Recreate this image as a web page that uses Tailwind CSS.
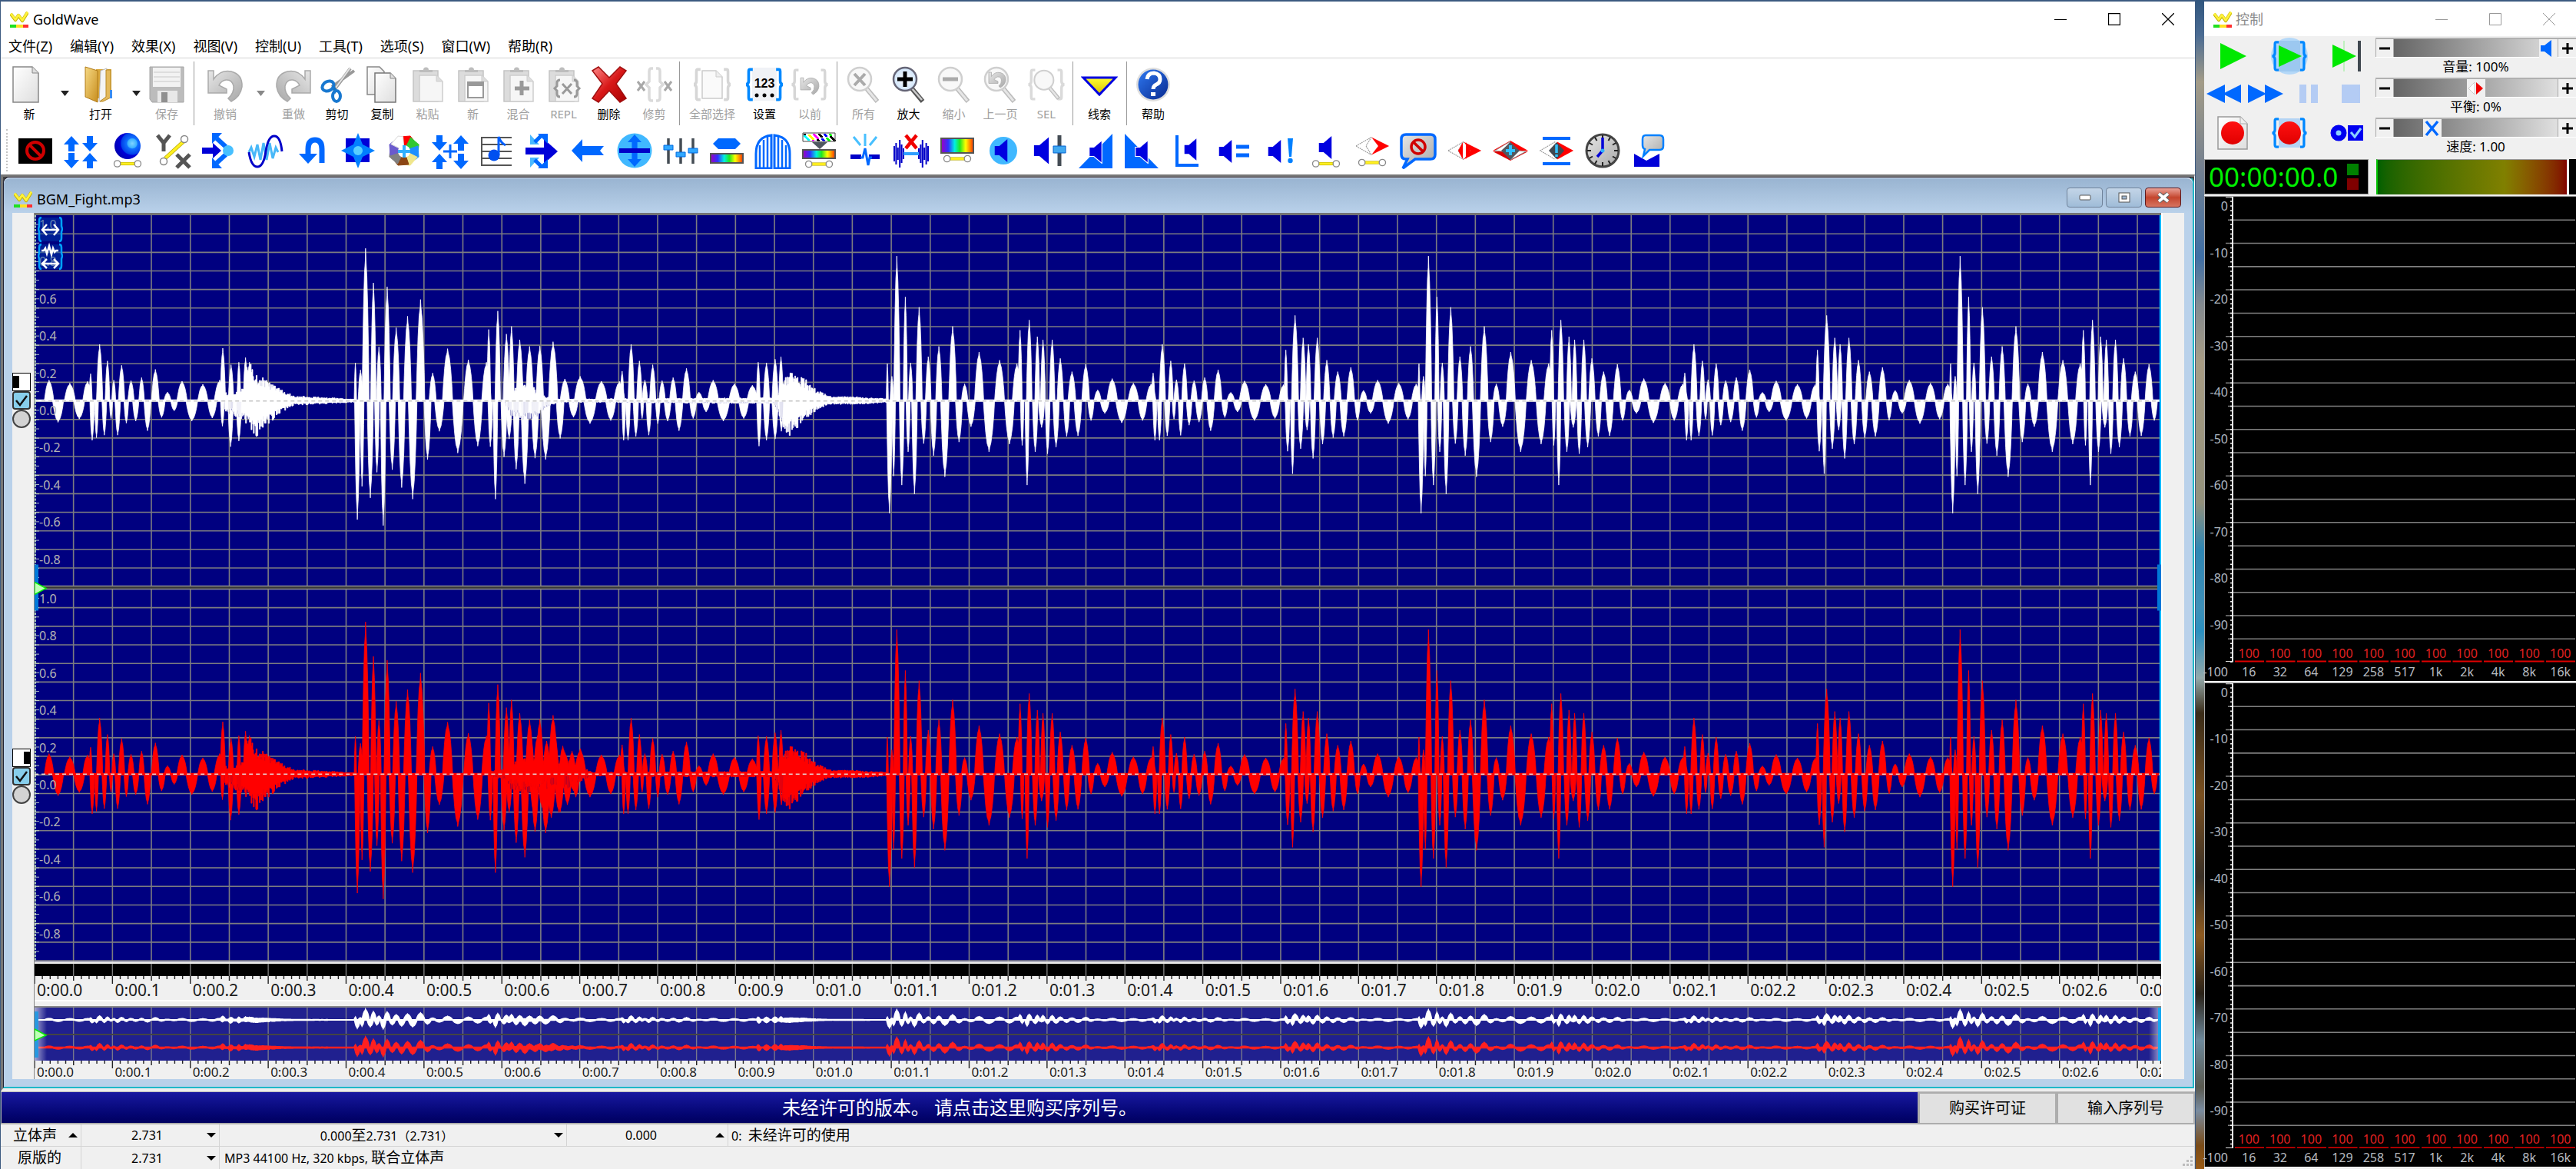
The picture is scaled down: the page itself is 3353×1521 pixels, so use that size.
<!DOCTYPE html>
<html lang="zh-CN">
<head>
<meta charset="utf-8">
<title>GoldWave</title>
<script src="https://cdn.jsdelivr.net/npm/@tailwindcss/browser@4"></script>
</head>
<body class="h-screen overflow-hidden flex bg-[#2f4a68] font-['Noto_Sans','Noto_Sans_CJK_SC',sans-serif] text-black">

<svg class="absolute w-0 h-0" aria-hidden="true">
  <defs>
    <linearGradient id="paper" x1="0" y1="0" x2="1" y2="1"><stop offset="0" stop-color="#fff"/><stop offset="1" stop-color="#dedede"/></linearGradient>
    <linearGradient id="silver" x1="0" y1="0" x2="1" y2="1"><stop offset="0" stop-color="#e6e6e6"/><stop offset="1" stop-color="#a8a8a8"/></linearGradient>
    <linearGradient id="folder" x1="0" y1="0" x2="1" y2="1"><stop offset="0" stop-color="#f6d984"/><stop offset="1" stop-color="#c98f1f"/></linearGradient>
    <linearGradient id="redx" x1="0" y1="0" x2="1" y2="1"><stop offset="0" stop-color="#ff8a8a"/><stop offset=".5" stop-color="#d81818"/><stop offset="1" stop-color="#a80000"/></linearGradient>
    <linearGradient id="redball" x1="0" y1="0" x2="0" y2="1"><stop offset="0" stop-color="#ff1010"/><stop offset="1" stop-color="#e00000"/></linearGradient>
    <linearGradient id="helpg" x1="0" y1="0" x2="1" y2="1"><stop offset="0" stop-color="#2f78f0"/><stop offset="1" stop-color="#082a90"/></linearGradient>
    <radialGradient id="ball" cx=".68" cy=".4" r=".7"><stop offset="0" stop-color="#7fd4ff"/><stop offset=".25" stop-color="#3ab0ff"/><stop offset=".3" stop-color="#1070ff"/><stop offset=".6" stop-color="#0040e8"/><stop offset=".65" stop-color="#0000d8"/><stop offset="1" stop-color="#0000b0"/></radialGradient>
    <radialGradient id="lens"><stop offset="0" stop-color="#fff"/><stop offset="1" stop-color="#cfe4fa"/></radialGradient>
    <linearGradient id="rainbow"><stop offset="0" stop-color="#a000c0"/><stop offset=".22" stop-color="#3030ff"/><stop offset=".42" stop-color="#00f0e0"/><stop offset=".58" stop-color="#20e820"/><stop offset=".76" stop-color="#ffff00"/><stop offset="1" stop-color="#ff3000"/></linearGradient>
    <linearGradient id="yel" x1="0" y1="0" x2="0" y2="1"><stop offset="0" stop-color="#ffff30"/><stop offset="1" stop-color="#d8c000"/></linearGradient>
    <linearGradient id="edgeL"><stop offset="0" stop-color="#fff" stop-opacity=".6"/><stop offset="1" stop-color="#fff" stop-opacity="0"/></linearGradient>
    <linearGradient id="edgeR"><stop offset="0" stop-color="#fff" stop-opacity="0"/><stop offset="1" stop-color="#fff" stop-opacity=".6"/></linearGradient>

    <symbol id="logo" viewBox="0 0 24 24"><path d="M1 5l6 8 4-6 5 7 7-11" fill="none" stroke="#c4b400" stroke-width="4.200" stroke-linejoin="round"/><path d="M1 4.500l6 8 4-6 5 7 7-11" fill="none" stroke="#fff23c" stroke-width="2.800" stroke-linejoin="round"/><path d="M0 19h8v4H0z" fill="#20e020"/><path d="M8 19h9v4H8z" fill="#ffe020"/><path d="M17 19h7v4h-7z" fill="#ff3030"/></symbol>
    <symbol id="clip" viewBox="0 0 48 48"><path d="M5 6h32v40H5z" fill="#dcdcdc" stroke="#c4c4c4" stroke-width="1.5"/><path d="M13 8V5h5a3.5 3.5 0 0 1 7 0h5v3z" fill="#bdbdbd"/><path d="M13 12h22l8 8v26H13z" fill="#f6f6f6" stroke="#cdcdcd" stroke-width="1.5"/><path d="M35 12v8h8" fill="#ddd" stroke="#cdcdcd"/></symbol>
    <symbol id="sl" viewBox="0 0 48 14"><path d="M12 7h24" stroke="#c0b000" stroke-width="5"/><path d="M12 7h24" stroke="#fff020" stroke-width="3.4"/><circle cx="8" cy="7" r="5" fill="#fff" stroke="#888" stroke-width="1.6"/><circle cx="40" cy="7" r="5" fill="#fff" stroke="#888" stroke-width="1.6"/></symbol>
    <symbol id="spk" viewBox="0 0 24 40"><path d="M1 12h8L23 0v40L9 28H1z" fill="#0000e0"/></symbol>
    <symbol id="au" viewBox="0 0 20 20"><path d="M0 11L10 0l10 11h-6v9H6v-9z" fill="#0068ff"/></symbol>
    <symbol id="ad" viewBox="0 0 20 20"><path d="M0 9l10 11L20 9h-6V0H6v9z" fill="#0068ff"/></symbol>
    <symbol id="br" viewBox="0 0 56 48"><path d="M11 2H7Q5 2 5 5v14q0 4-4 5q4 1 4 5v14q0 3 2 3h4M45 2h4q2 0 2 3v14q0 4 4 5q-4 1-4 5v14q0 3-2 3h-4" fill="none" stroke="currentColor" stroke-width="4"/></symbol>
    <symbol id="mag" viewBox="0 0 48 48"><path d="M27 28l15 18" stroke="#bbb" stroke-width="6"/><path d="M27 28l14 17" stroke="#e6e6e6" stroke-width="3"/><circle cx="19" cy="17" r="15" fill="#f8f8f8" stroke="#cfcfcf" stroke-width="2.5"/></symbol>
    <symbol id="undo" viewBox="0 0 48 48"><path d="M2 6h7v11Q18 4 32 7q15 4 14 20-2 13-14 19l-4-4q8-7 7-16-2-9-10-8-6 1-9 7l10 5v5H2z" fill="url(#silver)" stroke="#aaa" stroke-width="1.5"/></symbol>
    <symbol id="diam" viewBox="0 0 52 28"><path d="M24 1L2 14l22 13" fill="#fff" stroke="#999" stroke-width="1.3" stroke-dasharray="2 1"/><path d="M27 1l24 13-24 13z" fill="#f00"/></symbol>
    <symbol id="diamo" viewBox="0 0 52 28"><path d="M25 1L2 14l23 13-8-13z" fill="#fff" stroke="#999" stroke-width="1.3" stroke-dasharray="2 1"/><path d="M25 1l26 13-26 13 10-13z" fill="#f00"/></symbol>
  </defs>
</svg>

<!-- Editor window -->
<main class="flex-1 min-w-0 flex flex-col bg-white border-t-2 border-x border-[#3c5a80] border-b-0">
  <header class="h-[45px] flex items-center shrink-0">
    <svg class="w-6 h-6 ml-3 mr-[6px]"><use href="#logo"/></svg>
    <h1 class="text-[18px] leading-6 flex-1">GoldWave</h1>
    <button aria-label="最小化" class="w-[70px] h-full grid place-items-center"><svg class="w-4 h-4"><path d="M0 8.5h16" stroke="#000"/></svg></button>
    <button aria-label="最大化" class="w-[70px] h-full grid place-items-center"><svg class="w-4 h-4"><path d="M.5.5h15v15H.5z" fill="none" stroke="#000" stroke-width="1.3"/></svg></button>
    <button aria-label="关闭" class="w-[70px] h-full grid place-items-center"><svg class="w-4 h-4"><path d="M0 0l16 16M16 0L0 16" stroke="#000" stroke-width="1.3"/></svg></button>
  </header>
  <nav class="h-[30px] shrink-0 border-b-[3px] border-[#f0f0f0] flex gap-[23px] pl-[10px] text-[18px] leading-[27px]">
    <a href="#">文件(Z)</a><a href="#">编辑(Y)</a><a href="#">效果(X)</a><a href="#">视图(V)</a><a href="#">控制(U)</a><a href="#">工具(T)</a><a href="#">选项(S)</a><a href="#">窗口(W)</a><a href="#">帮助(R)</a>
  </nav>
  <div id="tools" class="h-[89px] shrink-0 flex pl-[7px] overflow-hidden"></div>
  <div class="h-[61px] shrink-0 flex items-center pb-[2px]">
    <div class="w-0 self-stretch ml-[7px] mr-[6px] my-[2px] border-l-2 border-dotted border-[#c4c4c4]"></div>
    <div id="effects" class="flex overflow-hidden"></div>
  </div>

  <!-- Document area -->
  <section class="flex-1 min-h-0 flex flex-col border-t-[3px] border-l-[3px] border-r border-b-4 border-t-[#777] border-l-[#777] border-r-white border-b-[#eee] bg-[#444]">
    <article class="flex-1 min-h-0 flex flex-col rounded-t-lg border border-[#223] border-r-2 border-b-2 border-r-[#1fb8c8] border-b-[#1fb8c8] bg-[#b9d1ea] px-[11px] pb-[10px]">
      <header class="h-[46px] shrink-0 flex items-center -mx-[11px] pl-[13px] pr-[15px] rounded-t-lg border-t border-[#e6eef8] bg-linear-to-b from-[#99b4d1] to-[#b9d1ea]">
        <svg class="w-6 h-6 mr-[6px] mt-2"><use href="#logo"/></svg>
        <h2 class="text-[18px] leading-6 flex-1 mt-2">BGM_Fight.mp3</h2>
        <div class="flex gap-1 mt-1">
          <button aria-label="最小化" class="w-[47px] h-[26px] rounded border border-[#6f8299] bg-linear-to-b from-[#c3d5e8] via-[#b4cae0] via-45% to-[#9fbcd8] grid place-items-center"><svg class="w-4 h-[9px]"><rect x="1" y="2" width="14" height="6" rx="1" fill="#fff" stroke="#555"/></svg></button>
          <button aria-label="还原" class="w-[47px] h-[26px] rounded border border-[#6f8299] bg-linear-to-b from-[#c3d5e8] via-[#b4cae0] via-45% to-[#9fbcd8] grid place-items-center"><svg class="w-4 h-[14px]"><rect x="1" y="1" width="14" height="12" fill="#fff" stroke="#555"/><rect x="5" y="5" width="6" height="4" fill="#9db6d0" stroke="#555"/></svg></button>
          <button aria-label="关闭" class="w-[47px] h-[26px] rounded border border-[#5a1a20] bg-linear-to-b from-[#e8a096] via-[#c4442c] via-50% to-[#d67460] grid place-items-center"><svg class="w-[18px] h-[14px]"><path d="M3 2l12 10M15 2L3 12" stroke="#666" stroke-width="6"/><path d="M3 2l12 10M15 2L3 12" stroke="#fff" stroke-width="3.6"/></svg></button>
        </div>
      </header>

      <div class="flex-1 min-h-0 flex bg-[#f0f0f0]">
        <!-- Channel switches -->
        <aside class="w-7 shrink-0 flex flex-col pb-[150px]">
          <div class="flex-1 flex flex-col justify-center">
            <button aria-label="左声道" class="w-6 h-6 bg-white border border-black"><span class="block w-2 h-4 bg-black"></span></button>
            <label class="relative w-6 h-6"><input type="checkbox" checked aria-label="启用左声道" class="appearance-none block w-6 h-6 rounded bg-[#87ceeb] border-2 border-[#333]"><svg class="absolute inset-0 w-6 h-6 pointer-events-none"><path d="M5 12l5 6 9-12" fill="none" stroke="#111" stroke-width="2.5"/></svg></label>
            <input type="radio" name="solo" aria-label="左声道独奏" class="appearance-none w-6 h-6 rounded-full bg-[#d3d3d3] border-2 border-[#444]">
          </div>
          <div class="flex-1 flex flex-col justify-center">
            <button aria-label="右声道" class="w-6 h-6 bg-white border border-black"><span class="block w-2 h-4 bg-black ml-auto"></span></button>
            <label class="relative w-6 h-6"><input type="checkbox" checked aria-label="启用右声道" class="appearance-none block w-6 h-6 rounded bg-[#87ceeb] border-2 border-[#333]"><svg class="absolute inset-0 w-6 h-6 pointer-events-none"><path d="M5 12l5 6 9-12" fill="none" stroke="#111" stroke-width="2.5"/></svg></label>
            <input type="radio" name="solo" aria-label="右声道独奏" class="appearance-none w-6 h-6 rounded-full bg-[#d3d3d3] border-2 border-[#444]">
          </div>
        </aside>

        <div class="flex-1 min-w-0 flex flex-col border-l border-[#888] border-r-2 border-r-white">
          <div class="h-[3px] shrink-0 bg-[#747474]"></div>
          <div class="flex-1 min-h-0 relative bg-[#000080] overflow-hidden">
            <svg id="wave" class="absolute inset-0 w-full h-full" viewBox="0 0 2766 972" preserveAspectRatio="none"></svg>
            <div id="levels" class="absolute inset-0 flex flex-col text-[16px] leading-6 text-[#b4b4b4] pl-[6px] pointer-events-none"></div>
            <svg class="absolute left-1 top-[2px] w-[33px] h-[70px]">
              <g fill="#0040b0" fill-opacity=".45"><path d="M2 1h28v31H2zM2 36h28v32H2z"/></g>
              <g fill="none" stroke="#00a0ff" stroke-width="2.5"><path d="M5 1Q2 1 2 5v7l-1 4 1 4v8q0 4 3 4M28 1q3 0 3 4v7l1 4-1 4v8q0 4-3 4M5 36q-3 0-3 4v7l-1 4 1 4v9q0 4 3 4M28 36q3 0 3 4v7l1 4-1 4v9q0 4-3 4"/></g>
              <g fill="none" stroke="#fff" stroke-width="2.5"><path d="M7 17h19M12 10l-6 7 6 7M21 10l6 7-6 7M7 61h19M12 55l-6 6 6 6M21 55l6 6-6 6M5 44h3l2-3 2 7 3-10 3 11 2-8 2 5 2-2h3"/></g>
            </svg>
          </div>
          <div class="h-[3px] shrink-0 bg-[#e4e4e4]"></div>
          <svg id="ruler" class="w-full h-[28px] shrink-0" viewBox="0 0 2766 28" preserveAspectRatio="none"></svg>
          <div id="times" class="h-[30px] -mt-[9px] -mb-[5px] shrink-0 flex overflow-hidden text-[21px] leading-[30px] text-[#1c1c1c]"></div>
          <div class="h-[2px] shrink-0 bg-white mt-[3px]"></div>
          <div class="h-[6px] shrink-0"></div>
          <div class="h-[2px] shrink-0 bg-[#888]"></div>
          <svg id="overview" class="w-full h-[69px] shrink-0 bg-[#20208f]" viewBox="0 0 2766 69" preserveAspectRatio="none"></svg>
          <svg id="ruler2" class="w-full h-[10px] shrink-0" viewBox="0 0 2766 10" preserveAspectRatio="none"></svg>
          <div id="times2" class="h-6 -mt-[7px] -mb-[3px] shrink-0 flex overflow-hidden text-[17px] leading-6 text-[#1c1c1c]"></div>
        </div>
        <div class="w-7 shrink-0"></div>
      </div>
    </article>
  </section>

  <!-- Licence bar -->
  <div class="h-[43px] shrink-0 flex bg-[#adadad] border-t border-[#bbb]">
    <a href="#" class="flex-1 bg-linear-to-b from-[#1818a0] to-[#000060] text-white text-[24px] leading-[40px] text-center ml-px mr-[3px] mb-[2px]">未经许可的版本。 请点击这里购买序列号。</a>
    <button class="w-[176px] my-[2px] mr-1 bg-[#e1e1e1] text-[20px]">购买许可证</button>
    <button class="w-[176px] my-[2px] mr-[2px] bg-[#e1e1e1] text-[20px]">输入序列号</button>
  </div>
  <footer class="h-[58px] shrink-0 bg-[#f0f0f0] text-[16px] leading-[28px] relative">
    <div class="h-[29px] flex border-b border-[#d4d4d4] *:border-r *:border-[#d4d4d4]">
      <div class="w-[105px] flex items-center justify-between pl-4 pr-1"><span class="text-[19px]">立体声</span><svg class="w-3 h-2"><path d="M0 7L6 1l6 6z"/></svg></div>
      <div class="w-[180px] flex items-center pr-1"><span class="flex-1 text-center pl-2">2.731</span><svg class="w-3 h-2"><path d="M0 1l6 6 6-6z"/></svg></div>
      <div class="w-[452px] flex items-center pr-1"><span class="flex-1 text-center">0.000<span class="text-[19px]">至</span>2.731（2.731）</span><svg class="w-3 h-2"><path d="M0 1l6 6 6-6z"/></svg></div>
      <div class="w-[210px] flex items-center pr-1"><span class="flex-1 text-center">0.000</span><svg class="w-3 h-2"><path d="M0 7L6 1l6 6z"/></svg></div>
      <div class="flex-1 pl-1">0:&nbsp; <span class="text-[19px]">未经许可的使用</span></div>
    </div>
    <div class="h-[29px] flex *:border-r *:border-[#d4d4d4]">
      <div class="w-[105px] pl-[22px]"><span class="text-[19px]">原版的</span></div>
      <div class="w-[180px] flex items-center pr-1"><span class="flex-1 text-center pl-2">2.731</span><svg class="w-3 h-2"><path d="M0 1l6 6 6-6z"/></svg></div>
      <div class="flex-1 pl-[6px]">MP3 44100 Hz, 320 kbps, <span class="text-[19px]">联合立体声</span></div>
    </div>
    <svg class="absolute right-0 bottom-[3px] w-4 h-4"><path d="M10 2h3v3h-3zM5 7h3v3H5zM10 7h3v3h-3zM0 12h3v3H0zM5 12h3v3H5zM10 12h3v3h-3z" fill="#bcbcbc"/></svg>
  </footer>
</main>

<!-- Strip of desktop between the windows -->
<div class="w-[11px] shrink-0 bg-[linear-gradient(to_bottom,#31567e_0%,#4b6c93_3%,#a39c88_7%,#77828f_14%,#3f6fa5_22%,#838a90_26%,#a89d85_31%,#93917c_43%,#2f87b4_47%,#3f90b8_52%,#2b90c0_54%,#94a9aa_58%,#3a2c18_61%,#7a5020_68%,#3a3026_75%,#8d5a20_80%,#2a2218_85%,#6e8a9c_89%,#5a5a50_93%,#7a8ca0_95%,#7a4c18_98%,#9a5a14_100%)]"></div>

<!-- Control window -->
<aside class="w-[484px] shrink-0 flex flex-col bg-[#f0f0f0] border-t-2 border-[#3c5a80]">
  <header class="h-[45px] shrink-0 flex items-center bg-white text-[#8a8a8a]">
    <svg class="w-6 h-6 ml-3 mr-[5px]"><use href="#logo"/></svg>
    <h2 class="text-[18px] leading-6 flex-1">控制</h2>
    <button aria-label="最小化" class="w-[70px] h-full grid place-items-center"><svg class="w-4 h-4"><path d="M0 8.5h16" stroke="#999"/></svg></button>
    <button aria-label="最大化" class="w-[70px] h-full grid place-items-center"><svg class="w-4 h-4"><path d="M.5.5h15v15H.5z" fill="none" stroke="#999"/></svg></button>
    <button aria-label="关闭" class="w-[70px] h-full grid place-items-center"><svg class="w-4 h-4"><path d="M0 0l16 16M16 0L0 16" stroke="#999"/></svg></button>
  </header>
  <div class="flex shrink-0 h-[160px]">
    <div class="w-[223px] shrink-0 pt-px">
      <div class="grid grid-cols-3 h-[50px] place-items-center">
        <button aria-label="播放"><svg class="w-10 h-10"><path d="M4 3l34 17L4 37z" fill="#00e800"/></svg></button>
        <button aria-label="播放选区"><svg class="w-[48px] h-[48px]"><ellipse cx="24" cy="24" rx="24" ry="24" fill="#b4d8f8"/><path d="M10 4h28v40H10z" fill="#9cc8f0"/><use href="#br" x="1" y="2" width="46" height="44" color="#0088ff"/><path d="M10 10l30 14-30 14z" fill="#00e800"/></svg></button>
        <button aria-label="播放到结尾"><svg class="w-11 h-10"><path d="M18 0v40" stroke="#c0f0c0" stroke-width="2"/><path d="M3 5l31 15L3 35z" fill="#00e800"/><path d="M38 0v40" stroke="#404850" stroke-width="4"/></svg></button>
      </div>
      <div class="flex h-[48px] items-center">
        <button aria-label="快退" class="w-[51px] ml-[3px]"><svg class="w-[47px] h-6"><path d="M0 12L24 0v24zM21 12L45 0v24z" fill="#0068ff"/></svg></button>
        <button aria-label="快进" class="w-[56px]"><svg class="w-[47px] h-6 ml-[3px]"><path d="M0 0v24l24-12zM22 0v24l24-12z" fill="#0068ff"/></svg></button>
        <button aria-label="暂停" class="w-[56px]"><svg class="w-6 h-6 ml-[14px]"><path d="M0 0h9v24H0zM15 0h9v24h-9z" fill="#b4ccf4"/></svg></button>
        <button aria-label="停止" class="w-[50px]"><svg class="w-6 h-6 ml-[13px]"><path d="M0 0h24v24H0z" fill="#b4ccf4"/></svg></button>
      </div>
      <div class="grid grid-cols-3 h-[54px] place-items-center">
        <button aria-label="录音到新文件"><svg class="w-10 h-11"><path d="M1 1h29l9 9v33H1z" fill="url(#paper)" stroke="#999" stroke-width="1.5"/><path d="M30 1v9h9" fill="#eee" stroke="#aaa"/><circle cx="20" cy="22" r="15" fill="url(#redball)"/></svg></button>
        <button aria-label="录音到选区"><svg class="w-[48px] h-11"><path d="M10 3h28v38H10z" fill="#b4d4f4"/><use href="#br" x="1" width="46" height="44" color="#0088ff"/><circle cx="24" cy="22" r="15" fill="url(#redball)"/></svg></button>
        <button aria-label="控制属性"><svg class="w-[44px] h-6"><circle cx="11" cy="12" r="7" fill="#8ad0ff" stroke="#0000f0" stroke-width="7"/><path d="M23 2h20v20H23z" fill="#0000f0"/><path d="M27 11l5 6 8-11" fill="none" stroke="#8ad0ff" stroke-width="3"/></svg></button>
      </div>
    </div>
    <div id="sliders" class="flex-1 min-w-0 flex flex-col pt-[2px]"></div>
  </div>
  <div class="flex shrink-0 h-[46px] gap-[10px] mb-[2px]">
    <div class="w-[214px] bg-black border border-[#999] flex items-center pl-[5px]">
      <output class="text-[35px] leading-[44px] text-[#00f000] w-[180px] whitespace-nowrap">00:00:00.0</output>
      <div class="flex flex-col gap-1"><span class="block w-[15px] h-[15px] bg-[#008000]"></span><span class="block w-[15px] h-[15px] bg-[#800000]"></span></div>
    </div>
    <div class="flex-1 border-l-2 border-[#00c000] border-t border-t-[#999] bg-linear-to-r from-[#006000] via-[#808000] via-67% to-[#800000]"></div>
    <div class="w-[9px] bg-black -ml-[7px]"></div>
  </div>
  <div id="spectra" class="flex-1 min-h-0 flex flex-col gap-[2px] bg-[#f0f0f0] pb-[3px]"></div>
</aside>

<script>
const $ = id => document.getElementById(id);
const use = (id, x, y, w, h, extra = '') => `<use href="#${id}" x="${x}" y="${y}" width="${w}" height="${h}" ${extra}/>`;

/* ---- main toolbar: [label, width, enabled, drawing] ---- */
const clip = use('clip', 0, 0, 48, 48);
const drop = (c, w = 32) => ['v', w, c];
const sep = w => ['|', w];
const tools = [
  ['新', 60, 1, '<path d="M3 1h25l8 8v38H3z" fill="url(#paper)" stroke="#888" stroke-width="1.5"/><path d="M28 1v8h8" fill="#ddd" stroke="#888"/>'], drop('#222', 33),
  ['打开', 60, 1, '<path d="M18 4h20v38H18z" fill="#d9a73a"/><path d="M24 6l8-3v38l-10 5z" fill="#f4f4f4" stroke="#bbb"/><path d="M4 1l16 5v41L4 40z" fill="url(#folder)" stroke="#b07a18"/><path d="M31 5h6v36l-10 5h-4l8-6z" fill="#e4b95a" stroke="#b88a28"/><path d="M36 31h3v11h-3z" fill="#3a8cf0"/>'], drop('#222', 32),
  ['保存', 48, 0, '<path d="M2 1h44v46H5l-3-4z" fill="#bcbcbc" stroke="#a4a4a4"/><path d="M6 2h36v25H6z" fill="#f2f2f2"/><path d="M7 8h34M7 14h34M7 20h34" stroke="#ddd" stroke-width="2"/><path d="M12 32h26v15H12z" fill="#e8e8e8"/><path d="M17 34h8v13h-8z" fill="#909090"/>'], sep(22),
  ['撤销', 60, 0, use('undo', 0, 0, 48, 48)], drop('#888'),
  ['重做', 54, 0, '<g transform="translate(48 0) scale(-1 1)">' + use('undo', 0, 0, 48, 48) + '</g>'],
  ['剪切', 59, 1, '<path d="M41 3L20 31M46 6L17 27" stroke="#999" stroke-width="4"/><path d="M41 2L22 28" stroke="#e4e4e4" stroke-width="2"/><path d="M18 27q4 2 2 8" fill="none" stroke="#1070c0" stroke-width="4"/><ellipse cx="12" cy="26" rx="8" ry="6" transform="rotate(-30 12 26)" fill="none" stroke="#1878d0" stroke-width="4"/><ellipse cx="23" cy="39" rx="5" ry="7" fill="none" stroke="#1878d0" stroke-width="4"/>'],
  ['复制', 59, 1, '<path d="M4 1h16l6 6v30H4z" fill="url(#paper)" stroke="#888" stroke-width="1.5"/><path d="M14 9h20l7 7v31H14z" fill="url(#paper)" stroke="#777" stroke-width="1.5"/><path d="M34 9v7h7" fill="#ddd" stroke="#888"/>'],
  ['粘贴', 59, 0, clip],
  ['新', 59, 0, clip + '<path d="M17 21h20v20H17z" fill="#fff" stroke="#999" stroke-width="2"/><path d="M16 20h22v6H16z" fill="#999"/>'],
  ['混合', 59, 0, clip + '<path d="M28 19v19M19 29h19" stroke="#999" stroke-width="5"/>'],
  ['REPL', 59, 0, clip + '<path d="M19 18q-4 0-4 4v4l-3 3 3 3v4q0 4 4 4M37 18q4 0 4 4v4l3 3-3 3v4q0 4-4 4M22 23l12 13M34 23L22 36" fill="none" stroke="#999" stroke-width="3"/>'],
  ['删除', 59, 1, '<path d="M2 6l8-5 14 14L38 1l8 5-13 17 13 19-8 5-14-15L10 47l-8-5 13-19z" fill="url(#redx)" stroke="#a01010" stroke-width="1.5"/>'],
  ['修剪', 59, 0, '<path d="M2 20l9 12M11 20L2 32M37 20l9 12M46 20l-9 12" stroke="#a8a8a8" stroke-width="3"/><path d="M22 3h-2q-3 0-3 4v13l-4 4 4 4v13q0 4 3 4h2M26 3h2q3 0 3 4v13l4 4-4 4v13q0 4-3 4h-2" fill="none" stroke="#dadada" stroke-width="3.5"/>'], sep(7),
  ['全部选择', 78, 0, use('br', -1, 0, 50, 48, 'color="#d6d6d6"') + '<path d="M11 6h18l8 8v28H11z" fill="#fafafa" stroke="#ccc" stroke-width="1.5"/><path d="M29 6v8h8" fill="#eee" stroke="#ccc"/>'],
  ['设置', 58, 1, '<path d="M8 2h32v43H8z" fill="#f0f2f6"/>' + use('br', -1, 0, 50, 48, 'color="#0088ff"') + '<text x="24" y="28" text-anchor="middle" font-family="Liberation Sans" font-weight="700" font-size="16">123</text><circle cx="14" cy="38" r="2.5"/><circle cx="24" cy="38" r="2.5"/><circle cx="34" cy="38" r="2.5"/>'],
  ['以前', 60, 0, use('br', 0, 1, 48, 46, 'color="#d6d6d6"') + use('undo', 11, 12, 26, 26)], sep(11),
  ['所有', 58, 0, use('mag', 0, 0, 48, 48) + '<path d="M12 10l14 15M26 10L12 25" stroke="#aaa" stroke-width="4"/>'],
  ['放大', 59, 1, '<path d="M27 28l15 18" stroke="#555" stroke-width="6"/><path d="M27 28l14 16" stroke="#ccc" stroke-width="2.5"/><circle cx="19" cy="17" r="15" fill="url(#lens)" stroke="#667" stroke-width="2.5"/><path d="M19 7v20M9 17h20" stroke="#000" stroke-width="5"/>'],
  ['缩小', 59, 0, use('mag', 0, 0, 48, 48) + '<path d="M9 17h20" stroke="#aaa" stroke-width="5"/>'],
  ['上一页', 62, 0, use('mag', 0, 0, 48, 48) + use('undo', 8, 4, 24, 26)],
  ['SEL', 58, 0, use('br', 0, 0, 48, 48, 'color="#dadada"') + use('mag', 5, 4, 40, 40)], sep(10),
  ['线索', 60, 1, '<path d="M3 15h42L24 37z" fill="url(#yel)" stroke="#0000e0" stroke-width="3"/>'], sep(10),
  ['帮助', 60, 1, '<circle cx="24" cy="24" r="22" fill="#ddd"/><circle cx="24" cy="24" r="19.500" fill="url(#helpg)"/><path d="M16 17q1-8 9-8 8 1 8 8 0 5-5 7-4 2-4 6" fill="none" stroke="#fff" stroke-width="5"/><path d="M21 34h6v5h-6z" fill="#fff"/>']
];
$('tools').innerHTML = tools.map(t => {
  if (t[0] === '|') return `<div class="shrink-0 flex justify-center py-[3px]" style="width:${t[1]}px"><span class="w-px bg-[#999]"></span></div>`;
  if (t[0] === 'v') return `<button aria-label="更多" class="shrink-0 grid place-items-center" style="width:${t[1]}px"><svg class="w-[11px] h-[7px]"><path d="M0 0h11L5.500 7z" fill="${t[2]}"/></svg></button>`;
  return `<button class="shrink-0 flex flex-col items-center pt-[9px] text-[15px] leading-[20px] whitespace-nowrap ${t[2] ? 'text-black' : 'text-[#a0a0a0]'}" style="width:${t[1]}px"><svg class="w-12 h-12 mb-1" viewBox="0 0 48 48">${t[3]}</svg>${t[0]}</button>`;
}).join('');

/* ---- effect toolbar ---- */
const ban = (x, y, r, w) => `<circle cx="${x}" cy="${y}" r="${r}" fill="none" stroke="#d00000" stroke-width="${w}"/><path d="M${x - r * .65} ${y - r * .65}L${x + r * .65} ${y + r * .65}" stroke="#d00000" stroke-width="${w}"/>`;
const rb = (y, h) => `<rect x="3" y="${y}" width="42" height="${h}" fill="url(#rainbow)" stroke="#555" stroke-width="2"/>`;
const spk = (x, y, w, h) => use('spk', x, y, w, h, 'preserveAspectRatio="none"');
const colors = ['#f00', '#30c830', '#1e8fff', '#f0e68c', '#8b4513', '#808080', '#6a5acd', '#fff'];
let noise = '', burst = '';
for (let i = 0; i < 44; i++) noise += `<rect x="${4 + (i * 17) % 40}" y="${2 + (i * 5) % 9}" width="3" height="2" fill="${['#000', '#f0f', '#0f0', '#ff0', '#00f', '#0ff', '#000'][i % 7]}"/>`;
[10, 14, 8, 18, 12, 7].forEach((h, i) => { burst += `M${2 + i * 2.4} ${28 - h}V${28 + h}M${46 - i * 2.4} ${28 - h}V${28 + h}`; });
let clock = '';
for (let i = 0; i < 12; i++) clock += `<path d="M24 4v5" stroke="#222" stroke-width="2" transform="rotate(${i * 30} 24 24)"/>`;
const bubble = '<path d="M8 3h32q6 0 6 6v20q0 6-6 6H20L4 47l6-12H8q-6 0-6-6V9q0-6 6-6z" fill="url(#silver)" stroke="#0068ff" stroke-width="3.500"/>';
const effects = [
  ['停用', '<path d="M2 8h44v33H2z"/>' + ban(24, 24, 11, 4)],
  ['压缩', use('au', 1, 5, 20, 20) + use('ad', 1, 27, 20, 20) + use('ad', 25, 5, 20, 20) + use('au', 25, 27, 20, 20)],
  ['多普勒', '<circle cx="24" cy="18" r="17" fill="url(#ball)"/>' + use('sl', 4, 34, 40, 14)],
  ['表达式', '<path d="M3 4l8 10 8-10M11 13v12M28 29l17 17M45 29L28 46" fill="none" stroke="#555" stroke-width="5"/><path d="M37 12L13 34" stroke="#b8a800" stroke-width="5"/><path d="M37 12L13 34" stroke="#fff020" stroke-width="3.400"/><circle cx="38" cy="9" r="4.500" fill="#fff" stroke="#888" stroke-width="1.500"/><circle cx="11" cy="38" r="4.500" fill="#fff" stroke="#888" stroke-width="1.500"/>'],
  ['回声', '<path d="M1 20h14v-6l11 10-11 10v-6H1z" fill="#0000d8"/><path d="M32 19L20 8M32 29L20 40" stroke="#0068ff" stroke-width="6"/><path d="M14 1h13L14 15zM14 47h13L14 33z" fill="#0068ff"/><circle cx="35" cy="24" r="7" fill="#48c0ff"/>'],
  ['失真', '<path d="M2 26l3-6 4 12 4-16 4 20 4-22 4 22 4-22 4 20 4-14 3 6" fill="none" stroke="#48b8f8" stroke-width="3"/><path d="M2 26q3 19 11 19t11-20T35 5t10 20" fill="none" stroke="#0000c8" stroke-width="3"/>'],
  ['倒转', '<path d="M37 40V22q0-12-9-12t-9 12v10" fill="none" stroke="#0068ff" stroke-width="7"/><path d="M7 28h24L19 41z" fill="#0068ff"/>'],
  ['滤波', '<path d="M8 8h31v31H8z" fill="#0000d8"/><path d="M24 1l6 15 16 8-16 8-6 15-6-15-16-8 16-8z" fill="#0080ff"/><circle cx="24" cy="24" r="6" fill="#58d0ff"/>'],
  ['混音', colors.map((c, i) => `<path d="M24 24L18 6l14-1 4 5z" fill="${c}" stroke="${c === '#fff' ? '#ddd' : c}" transform="rotate(${i * 45} 24 24)"/>`).join('') + '<circle cx="24" cy="25" r="8" fill="#fff"/><path d="M24 17v16M16 25h16" stroke="#30b0ff" stroke-width="4"/>'],
  ['扩展', use('ad', 0, 4, 20, 20) + use('au', 0, 28, 20, 20) + use('au', 28, 4, 20, 20) + use('ad', 28, 28, 20, 20) + '<path d="M24 16v18M15 25h18" stroke="#0068ff" stroke-width="3"/>'],
  ['音调', '<path d="M4 7h40M4 16h40M4 25h40M4 34h40M4 43h40M5 6v38" fill="none" stroke="#555" stroke-width="2"/><path d="M27 30V6q3 8 9 11" fill="none" stroke="#0060ff" stroke-width="3"/><circle cx="21" cy="30" r="7.500" fill="#0050f0"/>'],
  ['偏移', '<path d="M2 20h24V9l18 16-18 16V29H2z" fill="#0000d8"/><path d="M18 2h13v13z" fill="#0068ff"/><path d="M18 47h13V35z" fill="#0068ff"/><path d="M8 3v13h12zM8 46V33h12z" fill="#48b8ff"/><path d="M14 13l9-9M14 36l9 9" stroke="#0068ff" stroke-width="5"/>'],
  ['反向', '<path d="M2 24l14-15v9h28l-5 6 5 6H16v9z" fill="#0068ff"/>'],
  ['音量范围', '<circle cx="24" cy="24" r="22.500" fill="#40b8ff"/>' + use('au', 14, 3, 20, 18) + use('ad', 14, 27, 20, 18) + '<path d="M4 24h40" stroke="#0000c8" stroke-width="6"/>'],
  ['均衡器', '<path d="M8 8v33M24 8v33M40 8v33" stroke="#444c54" stroke-width="3.500"/><path d="M2 17h12v6H2zM18 26h12v6H18zM34 21h12v6H34z" fill="#30a8ff" stroke="#0068e0"/>'],
  ['参数均衡', '<path d="M13 8h22l7 7-7 7H13l-7-7z" fill="#0068ff"/>' + rb(28, 12)],
  ['噪声门', '<path d="M2 47V28Q2 6 22 4v43zM26 47V4q20 2 20 24v19z" fill="#fff" stroke="#0068ff" stroke-width="3"/><path d="M7 17v29M12 10v36M17 6v40M31 6v40M36 10v36M41 17v29" stroke="#0068ff" stroke-width="2.500"/>'],
  ['降噪', '<path d="M3 1h42v11H3z" fill="#fff"/>' + noise + '<path d="M3 1h42v11H3z" fill="none" stroke="#444"/><path d="M15 13h20L25 22z" fill="#505860"/>' + rb(23, 11) + use('sl', 4, 35, 40, 13)],
  ['去咔声', '<path d="M24 2v16M9 6l9 11M39 6l-9 11" stroke="#48c0ff" stroke-width="3"/><path d="M5 32h14M29 32h14" stroke="#0000c8" stroke-width="6"/><path d="M18 33h3l3-12 4 22 2-10h3" fill="none" stroke="#0068ff" stroke-width="3"/>'],
  ['静音消减', `<path d="${burst}" stroke="#0000c8" stroke-width="2"/><path d="M14 28h20" stroke="#30a0ff" stroke-width="4"/><path d="M17 4l14 17M31 4L17 21" stroke="#f00000" stroke-width="4.500"/>`],
  ['频谱滤波', rb(8, 19) + use('sl', 4, 28, 40, 13)],
  ['自动增益', '<circle cx="24" cy="24" r="18" fill="#40b8ff"/>' + spk(12, 8, 18, 32)],
  ['更改音量', spk(3, 6, 21, 36) + '<path d="M37 4v40" stroke="#444c54" stroke-width="5"/><path d="M29 18h16v9H29z" fill="#40a8f0" stroke="#0060d0"/>'],
  ['淡入', '<path d="M46 2v45H2z" fill="#0068ff"/><g stroke="#fff" stroke-width="1.500">' + spk(15, 10, 18, 31) + '</g>'],
  ['淡出', '<path d="M2 2v45h44z" fill="#0068ff"/><g stroke="#fff" stroke-width="1.500">' + spk(15, 10, 18, 31) + '</g>'],
  ['最佳匹配', '<path d="M10 4v39h28" fill="none" stroke="#0068ff" stroke-width="4"/>' + spk(19, 8, 17, 29)],
  ['匹配音量', spk(4, 9, 18, 32) + '<path d="M27 19h17M27 30h17" stroke="#0068ff" stroke-width="5"/>'],
  ['最大化音量', spk(8, 9, 18, 32) + '<path d="M34 8h7l-2 24h-3z" fill="#0080ff"/><circle cx="37.500" cy="37" r="3.200" fill="#0080ff"/>'],
  ['塑造音量', spk(14, 5, 18, 30) + use('sl', 4, 34, 40, 14)],
  ['声像', use('diamo', 1, 5, 46, 26) + use('sl', 4, 33, 40, 13)],
  ['去人声', bubble + ban(24, 19, 9, 3.5)],
  ['立体声中心', use('diamo', 1, 11, 46, 26) + '<path d="M22 13l-6 11 6 11zM26 13l6 11-6 11z" fill="#f00"/>'],
  ['声道混合', '<path d="M24 11L1 24h46z" fill="#f00"/><path d="M1 25h46L24 37z" fill="#d00"/><path d="M24 12L4 24l10 1zM24 36l20-11-10-1z" fill="#fff" stroke="#999"/><path d="M24 13l12 11-12 12-12-12z" fill="#505860"/><path d="M24 17v13M18 24h12" stroke="#30c0ff" stroke-width="4"/>'],
  ['最大匹配', '<path d="M6 8h36M6 41h36" stroke="#0068ff" stroke-width="4"/>' + use('diam', 1, 11, 46, 26) + '<path d="M24 13l10 11-10 11-10-11z" fill="#404850"/><path d="M24 16v11M24 29v3" stroke="#30c0ff" stroke-width="3.500"/>'],
  ['时间变形', '<circle cx="24" cy="24" r="21" fill="url(#silver)" stroke="#444" stroke-width="3"/>' + clock + '<path d="M24 7v17l-7 8" fill="none" stroke="#0000d8" stroke-width="3.500"/><circle cx="24" cy="24" r="2.500" fill="#30b0ff"/>'],
  ['语音转换', '<path d="M5 28l16 9 17-9v17H5z" fill="#0000d8"/><path d="M20 4h18q5 0 5 5v9q0 5-5 5H25l-8 8 2-9q-3-1-3-5V9q0-5 4-5z" fill="url(#silver)" stroke="#0080ff" stroke-width="2.500"/>']
];
$('effects').innerHTML = effects.map(e => `<button aria-label="${e[0]}" class="w-[60px] shrink-0 grid place-items-center"><svg class="w-12 h-12" viewBox="0 0 48 48">${e[1]}</svg></button>`).join('');

/* ---- waveform peaks: centre, half width, height (3 units per pixel) ---- */
const intro = { s: 1.96, x0: -46, d: [
  127,12,80,180,14,68,225,12,75,233,4,105,256,8,220,276,6,155,292,5,80,312,8,138,336,8,78,363,7,90,398,10,122,429,9,33,466,13,76,519,13,64,562,14,80,570,7,205,591,7,140,611,5,150,628,6,168,638,8,150,
  150,14,-85,204,14,-72,237,6,-155,248,5,-145,268,6,-135,285,4,-70,302,7,-135,324,6,-88,348,8,-80,378,9,-118,414,9,-66,446,9,-40,491,15,-80,543,12,-68,569,5,-100,590,7,-180,611,7,-158],
  env: [[575,25,40],[600,25,50],[622,40,60],[628,110,75],[640,120,100],[655,85,125],[672,75,90],[700,52,60],[720,35,38],[750,15,15],[800,12,12],[905,5,5]] };
const first = { s: 1.96, x0: 354, d: [
  124,3,148,137,6,120,150,9,595,170,7,460,184,6,210,205,8,445,228,9,285,257,10,330,290,11,395,321,9,108,359,13,203,412,12,160,458,12,150,464,5,278,487,7,350,509,8,260,522,7,290,543,9,238,568,10,212,594,10,213,628,12,230,658,12,85,697,15,95,751,15,76,797,14,75,804,5,115,827,8,220,848,7,155,862,7,80,882,8,140,906,8,78,934,9,90,968,10,126,1000,9,33,1036,14,80,1090,14,66,1136,14,60,1151,5,150,1172,8,148,1194,8,162,1209,6,172,
  129,7,-465,141,5,-335,162,8,-380,179,6,-280,195,7,-488,218,8,-270,242,9,-340,270,11,-385,308,9,-230,338,12,-120,385,14,-205,436,12,-178,468,6,-180,481,6,-385,503,8,-220,516,8,-150,534,8,-268,556,10,-325,582,10,-225,609,12,-230,646,10,-148,680,12,-65,722,16,-90,775,13,-78,808,5,-155,819,6,-155,839,7,-140,855,4,-70,872,7,-135,895,6,-90,920,9,-80,949,10,-118,985,9,-70,1018,10,-44,1062,16,-80,1114,13,-70,1153,6,-178,1172,8,-155,1194,8,-150,1210,6,-120],
  env: [[505,15,10],[515,35,45],[550,60,60],[580,40,60],[605,15,25],[640,5,5],[1190,10,10],[1208,40,60],[1212,75,95],[1224,85,115],[1250,90,90],[1270,68,58],[1300,34,30],[1330,15,12],[1400,12,12],[1478,6,6]] };
const loop = { s: 2.178, x0: 1094, d: [
  33,3,145,46,5,95,60,9,565,84,6,405,99,6,148,123,9,365,149,8,172,179,9,212,218,11,290,252,9,65,293,13,190,351,14,158,400,13,145,409,6,275,435,8,315,458,7,250,474,7,238,500,8,238,523,9,165,556,11,113,595,11,142,629,10,42,670,15,86,730,15,68,780,14,65,786,5,108,812,9,220,836,7,155,852,7,82,875,8,145,902,9,78,932,9,90,970,11,121,1006,11,32,1045,15,77,1105,15,64,1155,13,62,1162,5,198,1188,10,333,1211,8,245,1226,7,220,1251,9,245,1278,9,158,1309,10,113,1346,11,130,1382,10,40,1422,15,80,1482,14,68,1531,13,65,
  39,8,-440,51,5,-295,74,7,-330,92,6,-200,110,8,-365,136,8,-168,164,9,-215,196,12,-298,236,10,-162,270,12,-102,321,16,-200,379,14,-170,415,5,-175,429,6,-330,452,8,-200,470,9,-105,487,7,-208,511,9,-182,541,9,-140,573,11,-138,610,9,-78,649,13,-50,697,17,-87,756,13,-78,791,6,-155,804,6,-155,826,8,-138,845,5,-72,864,7,-136,888,8,-96,916,10,-84,949,11,-118,989,9,-66,1025,12,-44,1073,17,-78,1131,14,-70,1167,7,-198,1181,6,-286,1204,8,-188,1222,7,-115,1239,8,-226,1266,9,-170,1296,9,-145,1326,11,-140,1365,8,-77,1402,12,-50,1452,16,-90,1508,13,-73], env: [] };
/* extra activity found only in the right channel */
const right = { s: 1, x0: -46, d: [690,6,170,700,5,150,712,5,130,722,6,160,733,5,110,745,5,90,756,5,100,695,5,-150,706,6,-130,718,6,-170,728,6,-150,739,6,-120,750,5,-90],
  env: [[640,10,10],[680,35,35],[700,55,55],[735,50,50],[762,20,18],[775,0,0]] };

const f = n => n.toFixed(1);
function wavePath(zero, k, parts) {
  let p = '';
  const seg = (g, shift) => {
    for (let i = 0; i < g.d.length; i += 3) {
      const c = g.x0 + shift + g.d[i] / g.s, w = g.d[i + 1] / g.s, h = g.d[i + 2] / 3 * k;
      if (c > 2762) continue;
      const pt = (a, b) => `L${f(c + a * w)} ${f(zero - b * h)}`;
      p += `M${f(c - w)} ${zero}` + pt(-.82, .3) + pt(-.58, .62) + pt(-.32, .84) + pt(-.08, .92) + pt(0, 1) + pt(.12, .92) + pt(.36, .82) + pt(.62, .6) + pt(.86, .28) + `L${f(c + w)} ${zero}z`;
    }
    const e = g.env;
    for (let i = 0; i + 1 < e.length; i++) {
      const [x1, u1, d1] = e[i], [x2, u2, d2] = e[i + 1];
      for (let x = x1; x < x2; x += 2) {
        const t = (x - x1) / (x2 - x1), j = .65 + .6 * Math.abs(Math.sin(x * 12.9898) * 43.7 % 1), j2 = .65 + .6 * Math.abs(Math.sin(x * 7.233) * 51.3 % 1);
        const u = (u1 + (u2 - u1) * t) * j / 3 * k, d = (d1 + (d2 - d1) * t) * j2 / 3 * k, X = g.x0 + shift + x / g.s;
        p += `M${f(X)} ${f(zero - u)}h1.2V${f(zero + d)}h-1.2z`;
      }
    }
  };
  parts.forEach(([g, s]) => seg(g, s));
  return p;
}
const left = [[intro, 0], [first, 0], [loop, 0], [loop, 691.5], [loop, 1383]];
const rightParts = [...left, [right, 0]];

const step = 50.65;
let v = '', h = '';
for (let i = 1; i * step < 2766; i++) v += `M${f(i * step)} 0V972`;
for (let i = 1; i < 20; i++) h += `M0 ${f(i * 24.18)}H2766M0 ${f(487 + i * 24.2)}H2766`;
let ticks = '';
for (let i = 1; i < 40; i++) ticks += `M0 ${f(i * 12.1)}h6M0 ${f(487 + i * 12.1)}h6`;
$('wave').innerHTML = `<path d="${v}${h}" stroke="#7c7c80" stroke-width="1.6"/>
 <path d="M0 483h2766v4H0z" fill="#383838"/><path d="M0 483H2766M0 487H2766M0 971H2766" stroke="#8c8c8c" stroke-width="1.4"/>
 <path d="M0 241.500H2764" stroke="#fff" stroke-width="3"/><path d="M20 728H2764" stroke="#f00" stroke-width="3"/>
 <path d="${wavePath(241.5, 1, left)}" fill="#fff" stroke="#fff" stroke-width=".8"/>
 <path d="${wavePath(728, 1, rightParts)}" fill="#f00" stroke="#f00" stroke-width=".8"/>
 <path d="M0 242H2766" stroke="#c4c4c4" stroke-width="1.4" stroke-dasharray="5 4"/><path d="M0 728H2766" stroke="#e8d0d0" stroke-width="1.4" stroke-dasharray="5 4"/>
 <path d="M1 0V971" stroke="#c8f0c8" stroke-width="1.6" stroke-dasharray="3 1.500"/><path d="${ticks}" stroke="#d8e8d8" stroke-width=".8"/>
 <path d="M2765 0V971" stroke="#00b8ff" stroke-width="2.4"/>
 <path d="M0 455h5v60H0zM2761 455h5v60h-5z" fill="#0078d8"/><path d="M0 478l15 8-15 8z" fill="#c0ffb8" stroke="#00f000" stroke-width="1.5"/>`;

$('levels').innerHTML = ['mb-[3px]', ''].map(m => `<div class="flex-1 flex flex-col ${m}">` +
  ['1.0', '0.8', '0.6', '0.4', '0.2', '0.0', '-0.2', '-0.4', '-0.6', '-0.8'].map(t => `<span class="flex-1">${t}</span>`).join('') + '</div>').join('');

/* ---- rulers ---- */
let minor = '', mid = '', grid2 = '', gridTop = '';
for (let i = 0; i * 10.13 < 2766; i++) {
  if (i % 5) minor += `M${f(i * 10.13)} 0v4`; else mid += `M${f(i * 10.13)} 0v${i % 10 ? 6 : 10}`;
}
for (let i = 1; i * step < 2766; i++) { grid2 += `M${f(i * step)} 0V69`; gridTop += `M${f(i * step)} 0V16`; }
$('ruler').innerHTML = `<path d="M0 0h2766v16H0z"/><path d="${gridTop}" stroke="#7c7c7c" stroke-width="1.4"/><g transform="translate(0 16)" stroke="#222" stroke-width="1.400"><path d="${minor}${mid}"/></g>`;
$('ruler2').innerHTML = `<g stroke="#222" stroke-width="1.400"><path d="${minor}${mid}"/></g>`;
const times = Array.from({ length: 28 }, (_, i) => `<span class="w-[3.6624%] shrink-0 pl-[3px]">0:0${(i / 10).toFixed(1)}</span>`).join('');
$('times').innerHTML = times;
$('times2').innerHTML = times;
$('overview').innerHTML = `<path d="${grid2}" stroke="#77778c" stroke-width="1.4"/><path d="M0 35H2766" stroke="#444" stroke-width="2"/>
 <path d="M5 16H2760" stroke="#fff" stroke-width="1.8"/><path d="M5 52H2760" stroke="#ff2020" stroke-width="2.4"/>
 <path d="${wavePath(16, .068, left)}" fill="#fff" stroke="#fff" stroke-width="1.8"/><path d="${wavePath(52, .068, rightParts)}" fill="#ff2020" stroke="#ff2020" stroke-width="1.8"/>
 <path d="M0 0h16v69H0z" fill="url(#edgeL)"/><path d="M2750 0h16v69h-16z" fill="url(#edgeR)"/><path d="M0 5h5v60H0z" fill="#2898e0"/><path d="M2762 0h4v69h-4z" fill="#18a8f0"/>
 <path d="M0 28l15 8-15 7z" fill="#c0ffb8" stroke="#00f000" stroke-width="1.5"/>`;

/* ---- sliders ---- */
const sliders = [
  ['volume', '音量: 100%', 100, '<path d="M2 8h5L16 1v22L7 16H2z" fill="#0068ff"/>'],
  ['balance', '平衡: 0%', 50, '<path d="M10 4L2 12l8 8z" fill="#fff" stroke="#ccc"/><path d="M12 4l9 8-9 8z" fill="#f00000"/>'],
  ['speed', '速度: 1.00', 20, '<path d="M4 3l15 18M19 3L4 21" stroke="#0068ff" stroke-width="3.500"/>']
];
$('sliders').innerHTML = sliders.map(([id, label, val, icon]) => `<div class="h-[52px] flex flex-col">
  <div class="h-[26px] flex border-t-2 border-[#b0b0b0] border-b border-b-white">
    <button aria-label="减小" class="w-6 shrink-0 border-x border-[#aaa] grid place-items-center"><svg class="w-4 h-4"><path d="M1 8h14" stroke="#000" stroke-width="3"/></svg></button>
    <div class="flex-1 min-w-0 relative">
      <input id="${id}" type="range" min="0" max="100" value="${val}" class="appearance-none block w-full h-full bg-linear-to-r from-[#666] to-[#e0e0e0] [&::-webkit-slider-thumb]:appearance-none [&::-webkit-slider-thumb]:w-6 [&::-webkit-slider-thumb]:h-6 [&::-webkit-slider-thumb]:bg-[#f0f0f0]">
      <svg class="absolute top-0 w-6 h-6 pointer-events-none" style="left:calc((100% - 24px) * ${val / 100})">${icon}</svg>
    </div>
    <button aria-label="增大" class="w-6 shrink-0 border-l border-[#aaa] grid place-items-center"><svg class="w-4 h-4"><path d="M1 8h14M8 1v14" stroke="#000" stroke-width="3"/></svg></button>
  </div>
  <label for="${id}" class="block text-center text-[17px] leading-6">${label}</label>
</div>`).join('');

/* ---- spectrum graphs ---- */
const bands = ['16', '32', '64', '129', '258', '517', '1k', '2k', '4k', '8k', '16k'];
let lines = '', small = '';
for (let i = 1; i < 20; i++) lines += `M${i % 2 ? 3 : 0} ${f(i * 30.25)}H455`;
for (let i = 0; i <= 100; i++) small += `M6 ${f(i * 6.05)}h2.500`;
$('spectra').innerHTML = ['左声道频谱', '右声道频谱'].map(name => `<section aria-label="${name}" class="flex-1 min-h-0 flex flex-col bg-black text-[16px] border-l border-[#aaa] border-t border-t-[#999]">
  <div class="flex-1 min-h-0 flex">
    <div class="w-[30px] shrink-0 flex flex-col text-right leading-[24px] text-[#b0b8c0]">${[0, 10, 20, 30, 40, 50, 60, 70, 80, 90].map(n => `<span class="flex-1">${n ? '-' + n : 0}</span>`).join('')}</div>
    <div class="flex-1 min-w-0 relative flex items-end pl-[7px]">
      <svg class="absolute inset-y-0 left-[-3px] w-[455px] h-full" viewBox="0 0 455 605" preserveAspectRatio="none"><path d="${lines}" stroke="#808080" stroke-width="1.5"/><path d="M0 0.800H8M0 604H8" stroke="#ddd"/><path d="${small}" stroke="#eee" stroke-width="1.5"/><path d="M9 0V605" stroke="#fff" stroke-width="1.8"/><path d="M12 604H455" stroke="#e00000" stroke-width="2" stroke-dasharray="38 2.500"/></svg>
      <div class="relative flex-1 grid grid-cols-11 text-center leading-[24px] text-[#e02020]">${bands.map(() => '<span>100</span>').join('')}</div>
    </div>
  </div>
  <div class="h-6 shrink-0 flex leading-[24px] text-[#b8bcc0]"><span class="w-[30px] shrink-0 flex justify-end">-100</span><div class="flex-1 ml-[7px] grid grid-cols-11 text-center">${bands.map(b => `<span>${b}</span>`).join('')}</div></div>
</section>`).join('');
</script>
</body>
</html>
